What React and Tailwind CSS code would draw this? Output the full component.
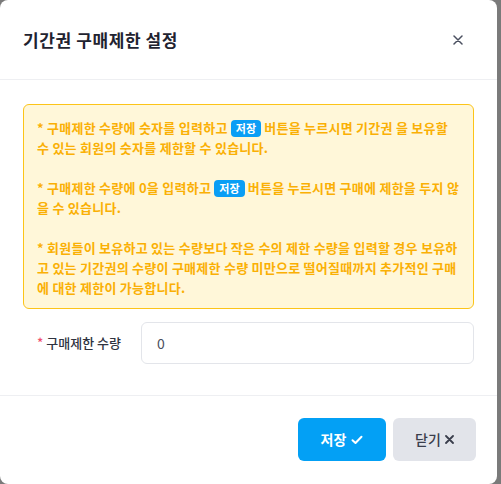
import React, { useState } from "react";

function Badge() {
  return (
    <span className="inline-flex items-center rounded-[4px] bg-[#0a9ef5] px-[5px] h-[17px] align-middle text-[11px] font-bold leading-none text-white -mt-[2px] tracking-normal">
      저장
    </span>
  );
}

function App() {
  const [limit, setLimit] = useState("0");

  return (
    <div
      className="min-h-screen bg-[#7a7a7a] flex"
      style={{ fontFamily: "'Noto Sans CJK KR', 'Noto Sans', sans-serif" }}
    >
      <div className="w-[497px] h-[484px] bg-white rounded-lg flex flex-col">

        {/* Header */}
        <div className="h-[80px] shrink-0 flex items-center justify-between pl-[23px] pr-[34px] border-b border-[#eeeff2]">
          <h2 className="text-[17px] tracking-[0.6px] font-bold text-[#1f2330]">기간권 구매제한 설정</h2>
          <button className="text-[#4b5060]">
            <svg width="10" height="10" viewBox="0 0 10 10" fill="none">
              <path d="M1 1 L9 9 M9 1 L1 9" stroke="currentColor" strokeWidth="1.5" strokeLinecap="round" />
            </svg>
          </button>
        </div>

        {/* Body */}
        <div className="flex-1 px-[23px] pt-[24px]">
          <div className="rounded-md border border-[#fcc419] bg-[#fff7d9] pl-[13px] pr-[12px] pt-[13px] pb-[10px] text-[13px] tracking-[0.25px] font-bold leading-[20px] text-[#fab005]">
            <p>
              * 구매제한 수량에 숫자를 입력하고 <Badge /> 버튼을 누르시면 기간권 을 보유할 수 있는 회원의 숫자를 제한할 수 있습니다.
            </p>
            <p className="mt-[20px]">
              * 구매제한 수량에 0을 입력하고 <Badge /> 버튼을 누르시면 구매에 제한을 두지 않을 수 있습니다.
            </p>
            <p className="mt-[20px]">
              * 회원들이 보유하고 있는 수량보다 작은 수의 제한 수량을 입력할 경우 보유하고 있는 기간권의 수량이 구매제한 수량 미만으로 떨어질때까지 추가적인 구매에 대한 제한이 가능합니다.
            </p>
          </div>

          <div className="mt-[13px] flex items-center">
            <label className="w-[118px] pl-[14px] text-[13px] font-medium text-[#2f3340]">
              <span className="text-[#f0506e] mr-[3px]">*</span>구매제한 수량
            </label>
            <input
              value={limit}
              onChange={(e) => setLimit(e.target.value)}
              className="h-[42px] flex-1 rounded-md border border-[#e3e5ea] px-[15px] text-[14px] text-[#4b5060] outline-none"
            />
          </div>
        </div>

        {/* Footer */}
        <div className="h-[89px] shrink-0 border-t border-[#eeeff2] flex items-center justify-end gap-[7px] pr-[21px] pb-[1px]">
          <button className="h-[43px] w-[88px] rounded-md bg-[#03a0f5] text-white text-[14px] font-bold flex items-center justify-center gap-[5px]">
            저장
            <svg width="12" height="10" viewBox="0 0 12 10" fill="none">
              <path d="M1.5 5.2 L4.5 8 L10.5 1.8" stroke="currentColor" strokeWidth="2" strokeLinecap="round" strokeLinejoin="round" />
            </svg>
          </button>
          <button className="h-[43px] w-[83px] rounded-md bg-[#e2e4ea] text-[#3a3e4c] text-[14px] font-medium flex items-center justify-center gap-[4px]">
            닫기
            <svg width="9" height="9" viewBox="0 0 9 9" fill="none">
              <path d="M1 1 L8 8 M8 1 L1 8" stroke="currentColor" strokeWidth="1.8" strokeLinecap="round" />
            </svg>
          </button>
        </div>

      </div>
    </div>
  );
}

export default App;
